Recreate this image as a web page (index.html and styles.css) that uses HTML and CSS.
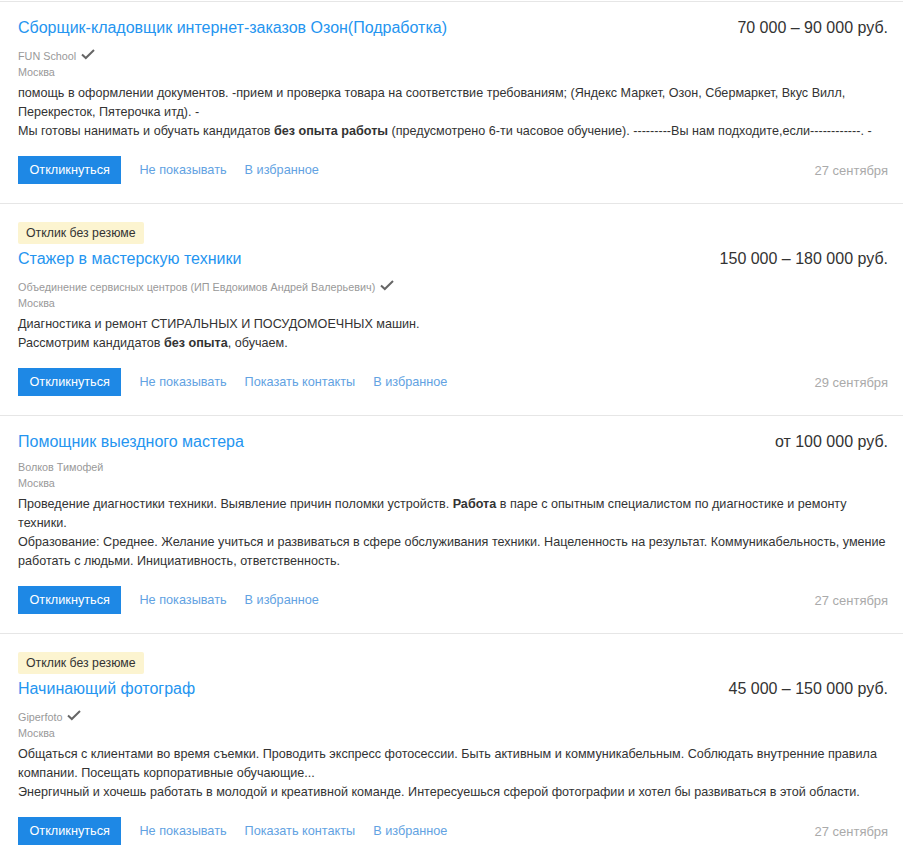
FILE: index.html
```html
<!DOCTYPE html>
<html lang="ru">
<head>
  <meta charset="UTF-8" />
  <meta name="viewport" content="width=device-width, initial-scale=1.0"/>
  <title>Вакансии</title>
  <link rel="stylesheet" href="styles.css">
</head>
<body>

  <div class="vacancy-list">

    <!-- Вакансия 1 -->
    <div class="vacancy">
      <div class="vacancy-head">
        <a class="vacancy-title" href="#">Сборщик-кладовщик интернет-заказов Озон(Подработка)</a>
        <span class="salary">70 000 – 90 000 руб.</span>
      </div>
      <div class="company">FUN School
        <svg class="check" width="14" height="16" viewBox="0 0 14 16"><polyline points="1,9.5 4.8,13 13,5" /></svg>
      </div>
      <div class="city">Москва</div>
      <div class="desc">
        <p>помощь в оформлении документов. -прием и проверка товара на соответствие требованиям; (Яндекс Маркет, Озон, Сбермаркет, Вкус Вилл,<br>Перекресток, Пятерочка итд). -</p>
        <p>Мы готовы нанимать и обучать кандидатов <b>без опыта работы</b> (предусмотрено 6-ти часовое обучение). ---------Вы нам подходите,если------------. -</p>
      </div>
      <div class="actions">
        <button class="btn-respond">Откликнуться</button>
        <a href="#">Не показывать</a>
        <a href="#">В избранное</a>
        <span class="date">27 сентября</span>
      </div>
    </div>

    <!-- Вакансия 2 -->
    <div class="vacancy">
      <span class="badge">Отклик без резюме</span>
      <div class="vacancy-head">
        <a class="vacancy-title" href="#">Стажер в мастерскую техники</a>
        <span class="salary">150 000 – 180 000 руб.</span>
      </div>
      <div class="company">Объединение сервисных центров (ИП Евдокимов Андрей Валерьевич)
        <svg class="check" width="14" height="16" viewBox="0 0 14 16"><polyline points="1,9.5 4.8,13 13,5" /></svg>
      </div>
      <div class="city">Москва</div>
      <div class="desc">
        <p>Диагностика и ремонт СТИРАЛЬНЫХ И ПОСУДОМОЕЧНЫХ машин.</p>
        <p>Рассмотрим кандидатов <b>без опыта</b>, обучаем.</p>
      </div>
      <div class="actions">
        <button class="btn-respond">Откликнуться</button>
        <a href="#">Не показывать</a>
        <a href="#">Показать контакты</a>
        <a href="#">В избранное</a>
        <span class="date">29 сентября</span>
      </div>
    </div>

    <!-- Вакансия 3 -->
    <div class="vacancy">
      <div class="vacancy-head">
        <a class="vacancy-title" href="#">Помощник выездного мастера</a>
        <span class="salary">от 100 000 руб.</span>
      </div>
      <div class="company">Волков Тимофей</div>
      <div class="city">Москва</div>
      <div class="desc">
        <p>Проведение диагностики техники. Выявление причин поломки устройств. <b>Работа</b> в паре с опытным специалистом по диагностике и ремонту<br>техники.</p>
        <p>Образование: Среднее. Желание учиться и развиваться в сфере обслуживания техники. Нацеленность на результат. Коммуникабельность, умение<br>работать с людьми. Инициативность, ответственность.</p>
      </div>
      <div class="actions">
        <button class="btn-respond">Откликнуться</button>
        <a href="#">Не показывать</a>
        <a href="#">В избранное</a>
        <span class="date">27 сентября</span>
      </div>
    </div>

    <!-- Вакансия 4 -->
    <div class="vacancy">
      <span class="badge">Отклик без резюме</span>
      <div class="vacancy-head">
        <a class="vacancy-title" href="#">Начинающий фотограф</a>
        <span class="salary">45 000 – 150 000 руб.</span>
      </div>
      <div class="company">Giperfoto
        <svg class="check" width="14" height="16" viewBox="0 0 14 16"><polyline points="1,9.5 4.8,13 13,5" /></svg>
      </div>
      <div class="city">Москва</div>
      <div class="desc">
        <p>Общаться с клиентами во время съемки. Проводить экспресс фотосессии. Быть активным и коммуникабельным. Соблюдать внутренние правила<br>компании. Посещать корпоративные обучающие...</p>
        <p>Энергичный и хочешь работать в молодой и креативной команде. Интересуешься сферой фотографии и хотел бы развиваться в этой области.</p>
      </div>
      <div class="actions">
        <button class="btn-respond">Откликнуться</button>
        <a href="#">Не показывать</a>
        <a href="#">Показать контакты</a>
        <a href="#">В избранное</a>
        <span class="date">27 сентября</span>
      </div>
    </div>

  </div>

</body>
</html>
```

FILE: styles.css
```css
/* === PAGE === */
body {
  font-family: 'Liberation Sans', Arial, sans-serif;
  margin: 0;
  padding-top: 1px;
  background: #fff;
  color: #333;
}

.vacancy-list {
  border-top: 1px solid #e6e6e6;
}

/* === VACANCY CARD === */
.vacancy {
  padding: 14px 15px 19px 18px;
  border-bottom: 1px solid #e6e6e6;
}

.badge {
  display: inline-block;
  margin: 4px 0 3px;
  padding: 0 8px;
  height: 22px;
  line-height: 22px;
  font-size: 12.3px;
  color: #333;
  background: #fcf4d0;
  border-radius: 2px;
}

.vacancy-head {
  display: flex;
  justify-content: space-between;
  align-items: flex-start;
  gap: 20px;
  line-height: 24px;
  font-size: 16px;
}

.vacancy-title {
  color: #2595f0;
  text-decoration: none;
}

.salary {
  color: #333;
  white-space: nowrap;
}

.company,
.city {
  font-size: 10.8px;
  line-height: 16px;
  color: #999;
}

.company {
  margin-top: 5px;
}

.check {
  vertical-align: -1px;
  margin-left: 2px;
  fill: none;
  stroke: #666;
  stroke-width: 2;
}

/* === DESCRIPTION === */
.desc {
  margin-top: 4px;
  font-size: 12.6px;
  line-height: 19px;
  color: #333;
  white-space: nowrap; /* lines are broken by hand */
}

.desc p {
  margin: 0;
}

/* === ACTIONS === */
.actions {
  display: flex;
  align-items: center;
  gap: 18px;
  margin-top: 15px;
  font-size: 12.7px;
}

.btn-respond {
  height: 28px;
  padding: 0 11.5px;
  border: 0;
  border-radius: 0;
  background: #1e88e5;
  color: #fff;
  font-family: inherit;
  font-size: 12.7px;
  cursor: pointer;
}

.actions a {
  color: #62a2e2;
  text-decoration: none;
}

.actions .date {
  margin-left: auto;
  font-size: 13px;
  color: #aaa;
}
```
